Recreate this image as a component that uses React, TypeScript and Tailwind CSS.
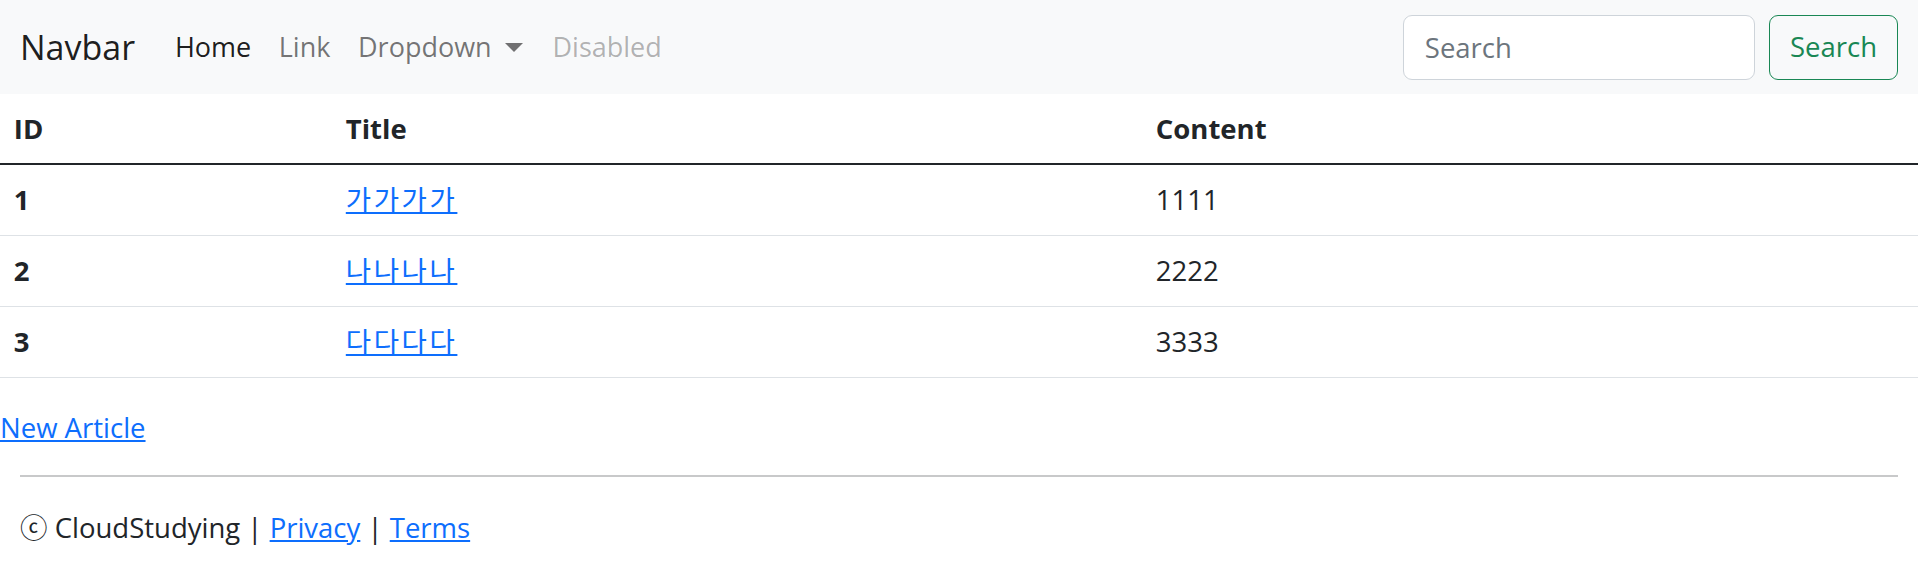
import { useState } from "react";

const rows = [
  { id: 1, title: "가가가가", content: "1111" },
  { id: 2, title: "나나나나", content: "2222" },
  { id: 3, title: "다다다다", content: "3333" },
];

function Navbar() {
  const [query, setQuery] = useState("");

  return (
    <nav className="flex h-[94px] items-center justify-between bg-[#f8f9fa] px-[20px]">
      {/* brand + links */}
      <div className="flex items-center">
        <a className="mr-[26px] py-[8.6px] text-[34px] leading-[1.5] text-black/90">
          Navbar
        </a>
        <ul className="flex items-center text-[27px] leading-[1.5]">
          <li>
            <a className="block px-[13.8px] text-black/90">Home</a>
          </li>
          <li>
            <a className="block px-[13.8px] text-black/55">Link</a>
          </li>
          <li>
            <a className="flex items-center pl-[13.8px] pr-[16px] text-black/55">
              Dropdown
              <span className="ml-[13px] h-0 w-0 border-x-[9px] border-t-[9px] border-x-transparent border-t-black/55" />
            </a>
          </li>
          <li>
            <a className="block px-[13.8px] text-black/30">Disabled</a>
          </li>
        </ul>
      </div>

      {/* search form */}
      <form className="flex items-center gap-[13.8px]" onSubmit={(e) => e.preventDefault()}>
        <input
          value={query}
          onChange={(e) => setQuery(e.target.value)}
          placeholder="Search"
          className="h-[65px] w-[352px] rounded-[9px] border-[1.7px] border-[#ced4da] bg-white px-[20.6px] text-[27.5px] text-[#212529] outline-none placeholder:text-[#6c757d]"
        />
        <button className="h-[65px] w-[129px] rounded-[9px] border-[1.7px] border-[#198754] text-[27.5px] text-[#198754]">
          Search
        </button>
      </form>
    </nav>
  );
}

export default function App() {
  return (
    <div className="min-h-[569px] bg-white font-['Open_Sans','Noto_Sans_CJK_KR',sans-serif] text-[27.5px] leading-[1.5] text-[#212529]">
      <Navbar />

      <table className="mb-[29px] w-full border-collapse text-left">
        <thead>
          <tr className="border-b-2 border-[#212529]">
            <th className="w-[332px] px-[13.8px] py-[13.8px] font-bold">ID</th>
            <th className="w-[810px] px-[13.8px] py-[13.8px] font-bold">Title</th>
            <th className="px-[13.8px] py-[13.8px] font-bold">Content</th>
          </tr>
        </thead>
        <tbody>
          {rows.map((row) => (
            <tr key={row.id} className="border-b border-[#dee2e6]">
              <th className="px-[13.8px] py-[14.4px] font-bold">{row.id}</th>
              <td className="px-[13.8px] py-[14.4px]">
                <a className="tracking-[2.6px] text-[#0d6efd] underline">{row.title}</a>
              </td>
              <td className="px-[13.8px] py-[14.4px]">{row.content}</td>
            </tr>
          ))}
        </tbody>
      </table>

      <a className="text-[#0d6efd] underline">New Article</a>

      <footer className="px-[20px]">
        <hr className="mt-[27px] mb-[29.5px] border-t-2 border-[#c8c9ca]" />
        <p>
          ⓒ CloudStudying | <a className="text-[#0d6efd] underline">Privacy</a> |{" "}
          <a className="text-[#0d6efd] underline">Terms</a>
        </p>
      </footer>
    </div>
  );
}
